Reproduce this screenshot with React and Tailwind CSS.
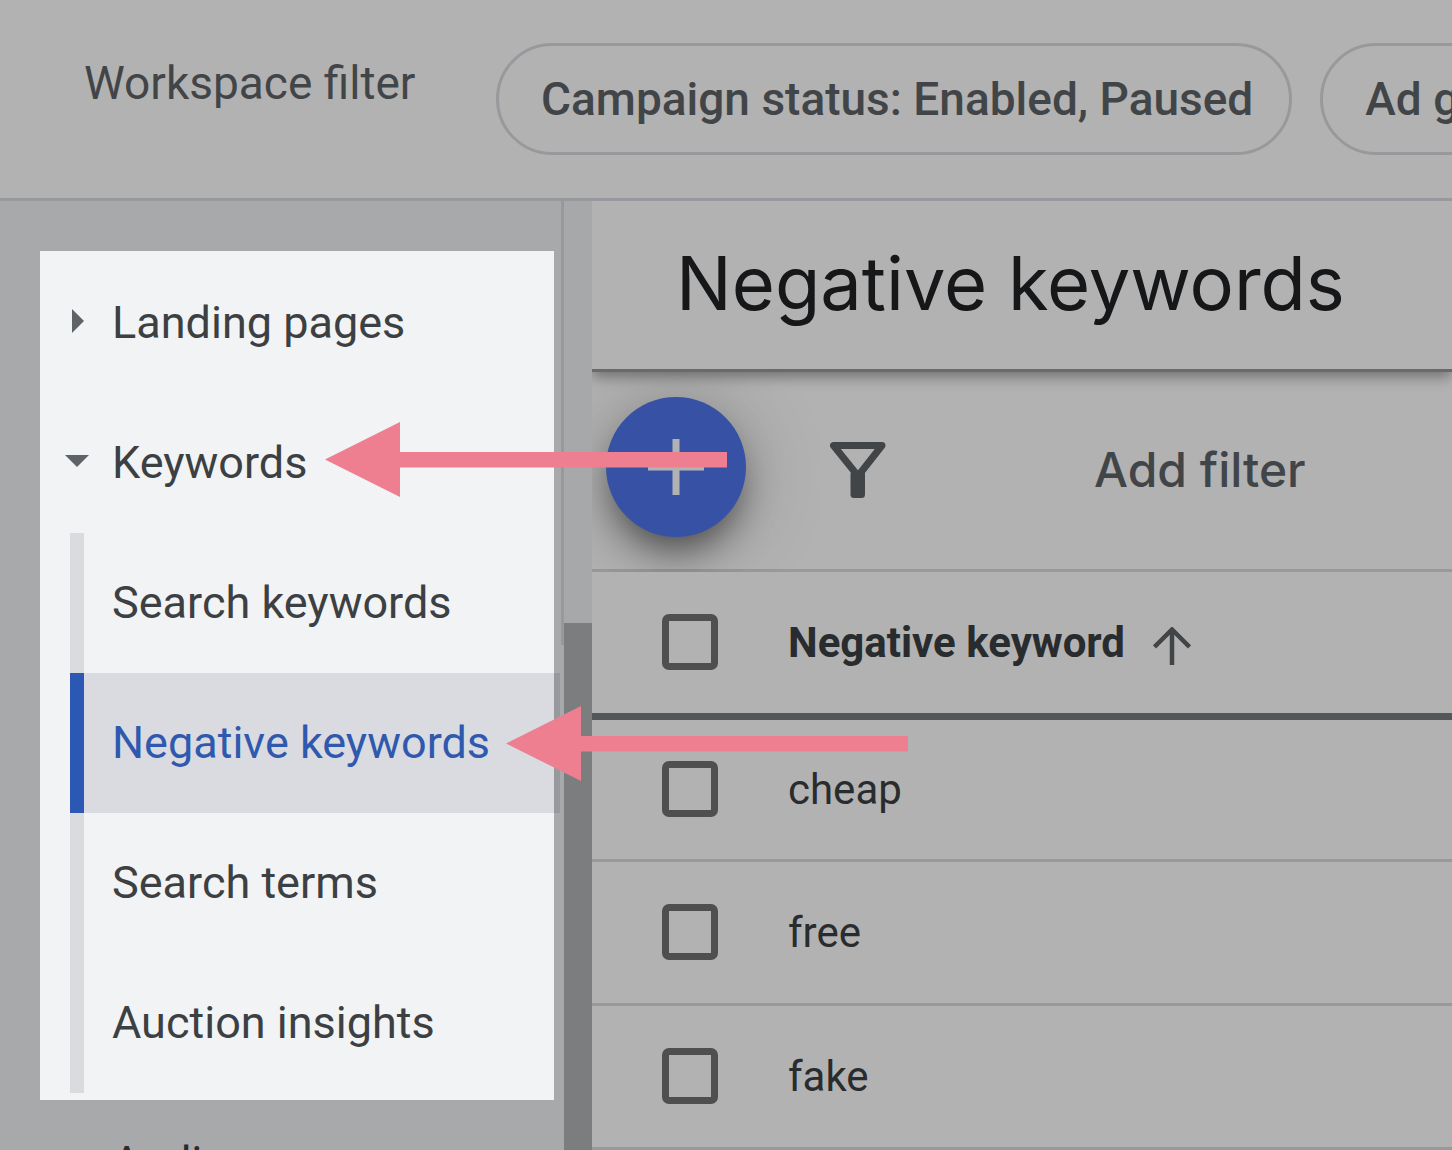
import { useState } from 'react';
import clsx from 'clsx';

const keywordPages = ['Search keywords', 'Negative keywords', 'Search terms', 'Auction insights'];

const negativeKeywords = ['cheap', 'free', 'fake'];

function Chip({ children }) {
    return (
        <button
            type="button"
            className="h-28 shrink-0 whitespace-nowrap rounded-full border-3 border-[#dadce0] pr-9 pl-[42px] text-[46px] font-medium text-[#5f6368]"
        >
            {children}
        </button>
    );
}

function Checkbox({ label, checked, onChange }) {
    return (
        <input
            type="checkbox"
            aria-label={label}
            checked={checked}
            onChange={onChange}
            className="block size-14 appearance-none rounded-[7px] border-7 border-[#727272] checked:bg-[#5076eb]"
        />
    );
}

function Arrow({ className }) {
    return (
        <svg viewBox="0 0 402 76" width="402" height="76" fill="#ee7f90" aria-hidden="true" className={clsx('pointer-events-none absolute', className)}>
            <path d="M0 37.500 75 0V30H402V45.500H75V75Z" />
        </svg>
    );
}

export default function App() {
    const [activePage, setActivePage] = useState('Negative keywords');
    const [keywordsOpen, setKeywordsOpen] = useState(true);
    const [selected, setSelected] = useState([]);

    const allSelected = selected.length === negativeKeywords.length;

    const toggle = (keyword) =>
        setSelected(selected.includes(keyword) ? selected.filter((k) => k !== keyword) : [...selected, keyword]);

    return (
        <div className="relative flex h-screen flex-col overflow-hidden bg-white font-[Roboto,sans-serif]">
            {/* Workspace filter bar */}
            <header className="flex shrink-0 items-start border-b-3 border-[#dadce0] py-[43px] pl-[84px]">
                <h2 className="w-[412px] shrink-0 text-[46px] leading-[80px] text-[#5f6368]">Workspace filter</h2>
                <div className="flex gap-7">
                    <Chip>Campaign status: Enabled, Paused</Chip>
                    <Chip>Ad group status: Enabled, Paused</Chip>
                </div>
            </header>

            <div className="flex min-h-0 flex-1">
                {/* Sidebar */}
                <aside className="relative flex w-[592px] shrink-0 bg-[#f1f3f4]">
                    <nav className="flex-1 overflow-hidden pt-[52px] pr-px text-[45px] text-[#3c4043]">
                        <a href="#landing-pages" className="flex h-[140px] items-center pl-[70px]">
                            <svg viewBox="0 0 14 24" width="14" height="24" fill="#5f6368" className="mr-7 mb-1">
                                <path d="M2 0 14 12 2 24Z" />
                            </svg>
                            Landing pages
                        </a>
                        <button
                            type="button"
                            aria-expanded={keywordsOpen}
                            onClick={() => setKeywordsOpen(!keywordsOpen)}
                            className="flex h-[140px] w-full items-center pl-[65px]"
                        >
                            <svg viewBox="0 0 24 12" width="24" height="12" fill="#5f6368" className="mr-[23px] mb-1">
                                <path d="M0 0H24L12 12Z" />
                            </svg>
                            Keywords
                        </button>
                        {keywordsOpen && (
                            <ul className="pl-[70px]">
                                {keywordPages.map((page) => (
                                    <li key={page}>
                                        <a
                                            href="#keywords"
                                            onClick={() => setActivePage(page)}
                                            className={clsx(
                                                'flex h-[140px] items-center border-l-14 pl-7',
                                                page === activePage ? 'border-[#2b57b5] bg-[#dadbe0] text-[#2f59ae]' : 'border-[#dadbde]'
                                            )}
                                        >
                                            {page}
                                        </a>
                                    </li>
                                ))}
                            </ul>
                        )}
                        <a href="#audiences" className="flex h-[140px] items-center pl-28">
                            Audiences
                        </a>
                    </nav>
                    <div className="h-[444px] w-[3px] bg-[#dadce0]" />
                    <div className="flex w-7 flex-col bg-[#eff1f4] pt-[422px]">
                        <div className="flex-1 bg-[#b1b3b5]" />
                    </div>

                    {/* Spotlight over the navigation, dims the rest of the page */}
                    <div className="pointer-events-none absolute top-[50px] right-[38px] left-10 z-20 h-[849px] shadow-[0_0_0_3000px_rgba(0,0,0,0.3)]" />
                </aside>

                {/* Main */}
                <main className="min-w-0 flex-1 overflow-hidden bg-white">
                    <div className="relative z-10 border-b-3 border-[#98999b] bg-white pl-[84px] shadow-[0_4px_14px_rgba(0,0,0,0.4)]">
                        <h1 className="h-[168px] whitespace-nowrap font-[Inter,sans-serif] text-[74px] leading-[164px] text-[#202124]">Negative keywords</h1>
                    </div>

                    <div className="flex h-[200px] items-center border-b-3 border-[#dadce0] pb-2 pl-[14px]">
                        <button
                            type="button"
                            aria-label="Add negative keywords"
                            className="flex size-[140px] shrink-0 items-center justify-center rounded-full bg-[#5076eb] shadow-[0_20px_35px_-8px_rgba(0,0,0,0.5),0_8px_80px_rgba(0,0,0,0.25)]"
                        >
                            <svg viewBox="0 0 56 56" width="56" height="56" fill="#fff">
                                <path d="M24.500 0h7v24.500H56v7H31.500V56h-7V31.500H0v-7h24.500z" />
                            </svg>
                        </button>
                        <div className="flex items-center pt-1.5 pl-[84px]">
                            <svg viewBox="0 0 56 56" width="56" height="56" className="shrink-0">
                                <path d="M3.500 3.500H52L28 34Z" fill="none" stroke="#5f6368" strokeWidth="7" strokeLinejoin="round" />
                                <rect x="20.500" y="29" width="14.500" height="27" rx="3.500" fill="#5f6368" />
                            </svg>
                            <button type="button" className="ml-[208px] whitespace-nowrap font-[Inter,sans-serif] text-[48px] leading-none font-medium text-[#5f6368]">
                                Add filter
                            </button>
                        </div>
                    </div>

                    <table className="relative w-full border-collapse bg-white text-left text-[42px] text-[#3c4043]">
                        <thead>
                            <tr className="h-[144px] border-b-7 border-[#797d82]">
                                <th className="w-[196px] pl-[70px]">
                                    <Checkbox
                                        label="Select all"
                                        checked={allSelected}
                                        onChange={() => setSelected(allSelected ? [] : negativeKeywords)}
                                    />
                                </th>
                                <th aria-sort="ascending">
                                    <button type="button" className="flex items-center gap-7 font-bold whitespace-nowrap">
                                        Negative keyword
                                        <svg viewBox="0 0 38 38" width="38" height="38" fill="none" stroke="#5f6368" strokeWidth="4.500" className="mt-2">
                                            <path d="M19 38V3M1.500 20 19 2.500 36.500 20" />
                                        </svg>
                                    </button>
                                </th>
                            </tr>
                        </thead>
                        <tbody>
                            {negativeKeywords.map((keyword) => (
                                <tr key={keyword} className="h-[144px] border-b-3 border-[#dadce0]">
                                    <td className="pl-[70px]">
                                        <Checkbox label={keyword} checked={selected.includes(keyword)} onChange={() => toggle(keyword)} />
                                    </td>
                                    <td>{keyword}</td>
                                </tr>
                            ))}
                        </tbody>
                    </table>
                </main>
            </div>

            {/* Callouts */}
            <Arrow className="top-[422px] left-[325px] z-30" />
            <Arrow className="top-[706px] left-[506px] z-30" />
        </div>
    );
}
